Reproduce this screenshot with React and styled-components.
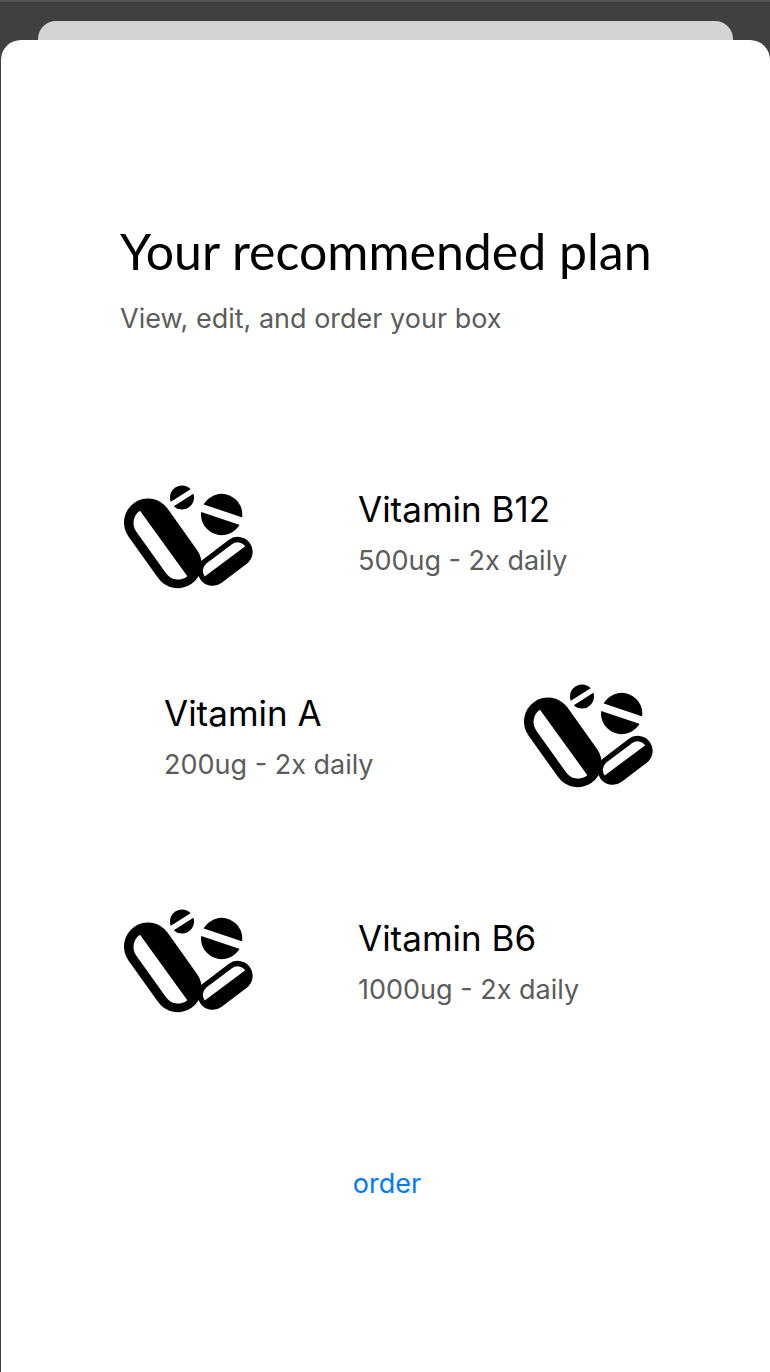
import React from "react";
import styled, { createGlobalStyle } from "styled-components";

const GlobalStyle = createGlobalStyle`
  * {
    box-sizing: border-box;
  }
  body {
    margin: 0;
    background-color: #404040;
    font-family: Inter, "Liberation Sans", sans-serif;
  }
`;

const plan = [
  { name: "Vitamin B12", dose: "500ug - 2x daily", align: "flex-start" },
  { name: "Vitamin A", dose: "200ug - 2x daily", reverse: true, space: 95 },
  { name: "Vitamin B6", dose: "1000ug - 2x daily", space: 121 },
];

function PillsIcon() {
  return (
    <PillsSvg viewBox="42 32 387 311" aria-hidden="true">
      {/* round tablets */}
      <circle cx="216" cy="69" r="36" />
      <path d="M174 97L260 42" stroke="#fff" strokeWidth="16" />
      <circle cx="335" cy="120" r="62" />
      <path d="M262 96L407 145" stroke="#fff" strokeWidth="24" />
      {/* capsules */}
      <path d="M114 144L203 269" stroke="#000" strokeWidth="144" strokeLinecap="round" />
      <path d="M90 109A44 44 0 0 0 78 170L167 295A44 44 0 0 0 232 305Z" fill="#fff" />
      <path d="M383 232L308 289" stroke="#000" strokeWidth="90" strokeLinecap="round" />
      <path d="M284 306A29 29 0 0 1 290 266L366 209A29 29 0 0 1 406 215Z" fill="#fff" />
    </PillsSvg>
  );
}

export default function App() {
  return (
    <Screen>
      <GlobalStyle />
      <BackSheet />
      <Sheet>
        <Title>Your recommended plan</Title>
        <Subtitle>View, edit, and order your box</Subtitle>
        <PlanList>
          {plan.map(({ name, dose, reverse, align, space }) => (
            <PlanItem key={name} $reverse={reverse} $align={align} $space={space}>
              <PillsIcon />
              <div>
                <ItemName>{name}</ItemName>
                <Dose>{dose}</Dose>
              </div>
            </PlanItem>
          ))}
        </PlanList>
        <OrderButton type="button">order</OrderButton>
      </Sheet>
    </Screen>
  );
}

const Screen = styled.div`
  display: flex;
  flex-direction: column;
  min-height: 100vh;
  padding-left: 1px;
  border-top: 2px solid #555;
  background-color: #404040;
`;

const BackSheet = styled.div`
  height: 19px;
  margin: 19px 37px 0;
  border-radius: 18px 18px 0 0;
  background-color: #d4d4d4;
`;

const Sheet = styled.main`
  display: flex;
  flex: 1;
  flex-direction: column;
  padding: 179px 116px 120px 119px;
  border-radius: 20px 20px 0 0;
  background-color: #fff;
`;

const Title = styled.h1`
  margin: 0;
  font-family: Lato, "Liberation Sans", sans-serif;
  font-size: 50px;
  font-weight: 400;
  line-height: 64px;
  color: #000;
`;

const Subtitle = styled.p`
  margin: 18px 0 0;
  font-size: 27px;
  line-height: 36px;
  color: #5c5c5c;
`;

const PlanList = styled.ul`
  margin: 148px 0 0;
  padding: 0;
  list-style: none;
`;

const PlanItem = styled.li`
  display: flex;
  flex-direction: ${({ $reverse }) => ($reverse ? "row-reverse" : "row")};
  justify-content: ${({ $reverse }) => ($reverse ? "space-between" : "flex-start")};
  align-items: ${({ $align }) => $align || "center"};
  gap: 105px;
  margin-top: ${({ $space }) => $space || 0}px;
  padding: ${({ $reverse }) => ($reverse ? "0 1px 0 44px" : "0 0 0 4px")};
`;

const PillsSvg = styled.svg`
  flex: none;
  width: 129px;
  height: 104px;
`;

const ItemName = styled.h2`
  margin: 0;
  font-size: 35px;
  font-weight: 400;
  line-height: 48px;
  color: #000;
`;

const Dose = styled.p`
  margin: 10px 0 0;
  font-size: 27px;
  line-height: 36px;
  color: #5c5c5c;
`;

const OrderButton = styled.button`
  align-self: center;
  margin: 149px 0 0;
  padding: 4px 8px;
  border: 0;
  background: none;
  font-family: inherit;
  font-size: 27px;
  line-height: 36px;
  color: #007aff;
  cursor: pointer;
`;
